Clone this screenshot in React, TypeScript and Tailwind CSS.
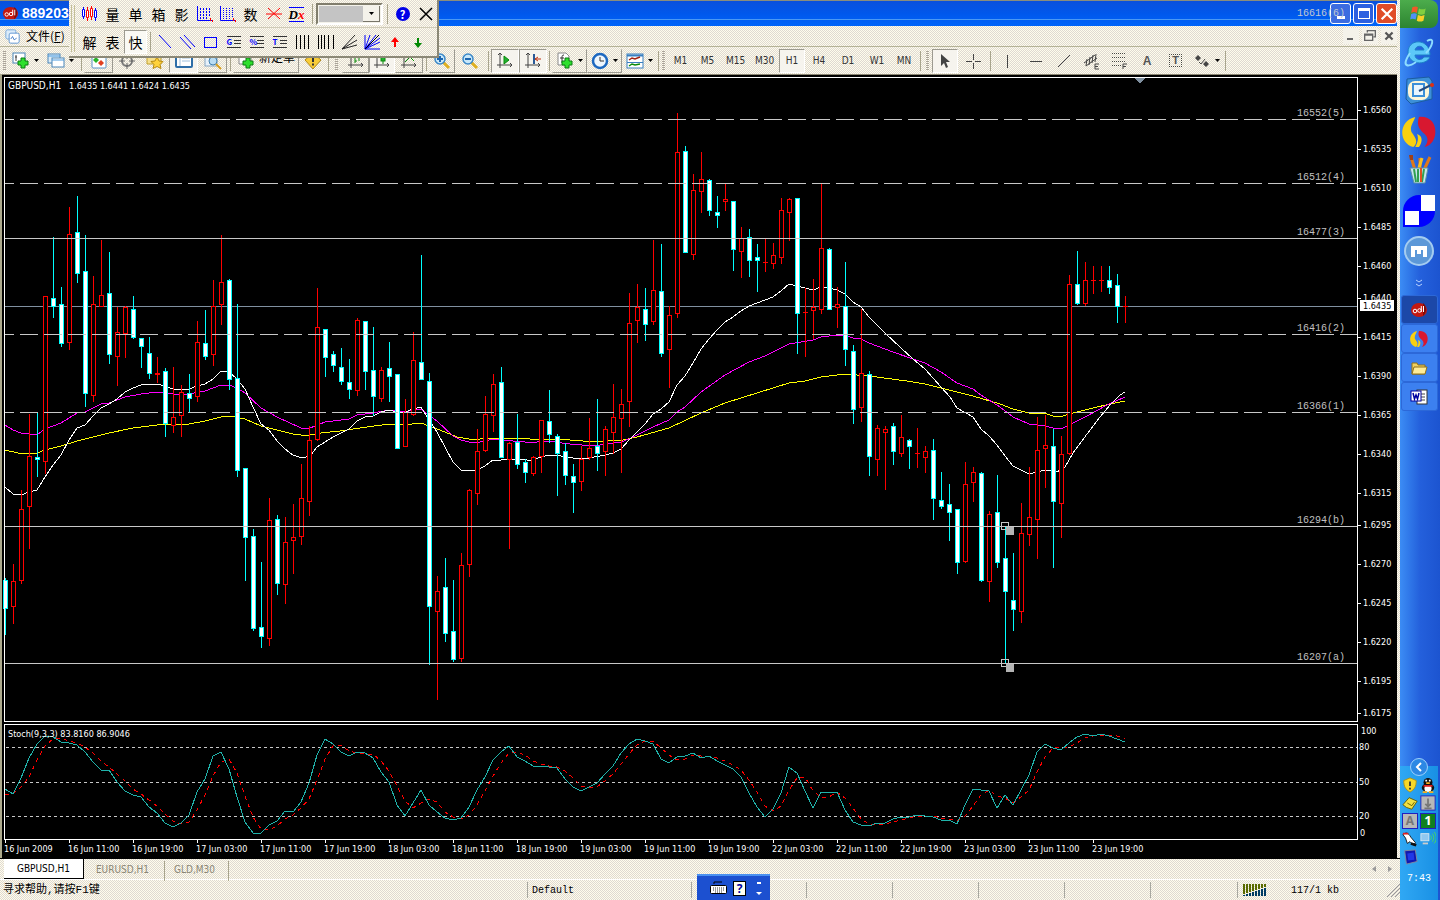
import React from "react";

const beige = "bg-[#efebe0] bg-[repeating-conic-gradient(#fffdec_0_25%,#dfd9d2_0_50%)] bg-[length:2px_2px]";
const ui = "font-['DejaVu_Sans_Condensed','DejaVu_Sans',sans-serif]";
const mono = "font-['Liberation_Mono','Noto_Sans_CJK_SC',monospace]";
const cjk = "font-['Noto_Sans_CJK_SC',sans-serif]";

// one bar per hour: direction, high, body top, body bottom, low
const bars = `d 578 580 609 635|u 564 581 607 624|u 490 509 581 584|u 414 456 507 549|d 412 457 460 477|u 296 296 462 474|d 237 298 307 318|d 287 304 344 347|u 207 234 343 350|d 196 232 274 283
d 235 271 394 407|u 276 304 396 402|u 240 295 307 307|d 252 293 355 364|u 307 332 357 386|u 306 307 334 358|d 296 309 338 339|d 338 338 347 368|d 337 353 374 379|u 357 373 375 383
d 368 371 424 437|u 367 417 426 433|u 385 392 416 437|d 374 393 399 412|u 321 342 397 402|d 310 343 357 360|u 280 306 355 366|u 235 282 305 325|d 279 280 380 390|d 304 378 471 477
d 468 468 538 581|d 529 536 629 631|d 562 627 637 648|u 498 520 639 646|d 515 519 584 595|u 517 542 585 604|u 504 537 541 574|u 464 498 537 545|u 426 440 502 516|u 288 327 440 441
d 329 329 358 377|d 351 354 366 372|d 348 367 382 385|d 359 382 390 399|u 318 320 391 396|d 321 321 372 390|d 327 370 397 416|u 367 370 399 402|d 342 368 377 402|d 374 374 449 449
u 399 412 447 447|u 332 360 415 416|d 255 362 380 380|d 373 381 607 665|u 576 591 612 700|d 558 587 634 642|d 580 631 660 662|u 553 565 659 662|u 489 490 565 577|u 429 451 494 505
u 396 414 451 452|u 374 384 416 432|d 367 382 458 458|u 442 443 460 549|d 414 442 465 469|d 459 462 473 483|u 456 457 474 476|u 420 420 457 473|d 390 421 435 443|d 434 436 454 496
d 443 451 476 485|d 464 476 483 513|u 446 459 482 491|u 418 448 458 460|d 399 446 454 471|u 426 429 452 476|u 384 417 433 454|u 389 404 419 473|u 293 323 402 427|u 284 307 321 343
d 288 309 325 341|u 240 290 322 325|d 244 291 354 357|u 306 315 350 388|u 113 152 314 318|d 146 151 253 253|u 174 190 255 260|u 152 179 192 213|d 179 180 211 216|d 196 212 216 228
u 183 199 202 211|d 201 201 250 271|u 227 238 252 278|d 229 237 261 277|d 244 257 261 292|u 239 262 263 272|u 243 255 264 269|u 198 210 258 264|u 198 199 213 241|d 198 198 314 354
u 288 312 313 357|u 279 307 311 339|u 184 248 310 314|d 248 249 310 310|u 287 304 308 328|d 262 306 350 366|d 345 351 410 424|u 309 373 408 422|d 371 374 457 476|u 425 428 460 476
u 426 429 433 490|d 423 426 452 465|u 415 437 454 457|d 439 440 447 469|u 428 453 454 468|u 446 451 458 473|d 439 450 499 520|d 472 500 507 509|d 484 504 513 541|d 509 509 563 574
u 462 484 562 563|u 467 472 483 502|d 472 473 581 582|u 511 514 582 602|d 475 512 563 568|d 527 558 592 663|d 553 600 610 631|u 503 533 612 623|u 467 517 535 546|u 417 450 520 559
u 415 445 449 488|d 429 446 502 568|u 436 454 504 538|u 275 284 454 455|d 251 284 304 305|u 262 280 304 306|u 266 280 281 294|u 266 280 281 292|d 266 280 288 294|d 274 285 307 323
u 296 306 307 323`
  .split(/[|\n]/)
  .map((s) => {
    const [dir, ...v] = s.split(" ");
    return { up: dir === "u", v: v.map(Number) };
  });

const fastMa =
  "5,487 13,494 21,495 29,492 37,490 45,477 53,465 61,455 69,440 77,428 85,425 93,416 101,408 109,404 117,399 125,392 133,388 141,385 149,384 157,384 165,386 173,389 189,389 197,386 205,384 213,379 221,371 229,372 237,379 245,389 253,407 261,424 269,430 277,441 285,449 293,455 302,458 310,456 317,447 325,442 333,437 341,433 349,429 357,421 365,417 373,416 381,412 389,410 397,412 405,412 413,409 421,407 429,420 437,432 445,447 453,462 461,470 470,471 477,470 485,466 493,460 501,460 509,459 520,459 527,460 533,460 541,457 549,455 557,455 565,457 573,458 589,458 605,455 613,453 621,449 629,440 645,424 653,414 661,409 669,402 677,385 685,376 693,363 701,349 709,339 717,330 725,322 733,317 741,311 749,306 757,303 773,297 781,291 789,284 797,286 805,288 813,290 821,287 829,288 837,290 845,294 853,302 861,307 869,317 885,333 901,348 913,359 925,369 941,387 950,397 957,408 973,417 981,429 989,436 997,445 1005,456 1013,466 1029,474 1045,470 1057,472 1065,467 1073,453 1087,434 1100,417 1110,405 1120,395 1125,392";
const midMa =
  "5,425 13,430 21,433 37,435 45,429 61,423 69,418 77,413 85,412 101,404 109,403 125,397 141,394 157,392 173,394 189,394 205,391 221,385 229,385 237,388 245,393 261,408 277,417 301,428 310,428 325,422 349,419 357,415 373,413 389,410 403,412 421,409 429,415 437,421 453,436 461,440 469,442 480,442 493,439 513,441 525,442 537,442 547,441 570,444 593,446 621,442 629,439 653,427 669,420 677,412 685,407 701,392 725,375 749,362 765,356 789,344 813,340 821,337 837,335 845,335 853,338 861,339 869,343 893,352 913,359 925,363 941,372 957,383 973,389 981,395 1000,407 1013,417 1029,424 1045,426 1053,428 1061,429 1073,423 1087,416 1107,405 1125,397";
const slowMa =
  "5,450 18,453 37,453 45,450 61,446 77,441 109,433 133,428 157,425 189,424 205,421 221,417 230,416 245,419 261,426 293,434 301,435 310,435 321,433 340,431 360,428 389,424 403,425 421,423 437,429 445,432 457,437 469,439 480,439 490,438 520,438 530,439 557,439 583,441 607,441 623,440 637,437 669,428 701,413 725,403 757,393 789,383 805,381 821,377 845,374 869,376 907,381 925,384 973,396 1000,404 1013,409 1029,413 1047,414 1053,416 1063,416 1073,413 1093,408 1110,404 1125,401";

const stoch = [
  789, 794, 778, 758, 744, 736, 737, 742, 743, 745, 752, 762, 770, 770, 782, 791, 795, 797, 807, 813,
  823, 827, 823, 815, 792, 779, 756, 752, 769, 797, 822, 833, 833, 825, 821, 811, 812, 802, 783, 755,
  739, 744, 752, 756, 752, 753, 758, 772, 782, 805, 816, 803, 790, 805, 812, 818, 820, 818, 807, 790,
  777, 760, 752, 746, 757, 761, 766, 766, 767, 768, 779, 787, 791, 787, 783, 774, 766, 753, 744, 739,
  741, 744, 759, 763, 757, 756, 753, 758, 756, 761, 765, 769, 777, 793, 807, 817, 809, 793, 767, 773,
  791, 808, 792, 792, 792, 810, 822, 825, 826, 823, 823, 819, 817, 817, 815, 816, 817, 820, 820, 824,
  805, 789, 790, 791, 808, 795, 805, 790, 775, 752, 744, 748, 750, 743, 737, 734, 736, 734, 736, 739, 742,
];
const kLine = stoch.map((y, i) => `${5 + 8 * i},${y}`).join(" ");
const dLine = stoch
  .map((y, i) => {
    const a = stoch[i - 1] ?? 796;
    const b = stoch[i - 2] ?? 798;
    return `${5 + 8 * i},${Math.round((y + a + b) / 3)}`;
  })
  .join(" ");

const levels: [number, string, boolean][] = [
  [119, "16552(5)", true],
  [183, "16512(4)", true],
  [238, "16477(3)", false],
  [334, "16416(2)", true],
  [412, "16366(1)", true],
  [526, "16294(b)", false],
  [663, "16207(a)", false],
];

const prices: [number, string][] = [
  [110, "1.6560"], [149, "1.6535"], [188, "1.6510"], [227, "1.6485"], [266, "1.6460"], [298, "1.6440"],
  [337, "1.6415"], [376, "1.6390"], [415, "1.6365"], [454, "1.6340"], [493, "1.6315"], [525, "1.6295"],
  [564, "1.6270"], [603, "1.6245"], [642, "1.6220"], [681, "1.6195"], [713, "1.6175"],
];

const times = [
  "16 Jun 2009", "16 Jun 11:00", "16 Jun 19:00", "17 Jun 03:00", "17 Jun 11:00", "17 Jun 19:00",
  "18 Jun 03:00", "18 Jun 11:00", "18 Jun 19:00", "19 Jun 03:00", "19 Jun 11:00", "19 Jun 19:00",
  "22 Jun 03:00", "22 Jun 11:00", "22 Jun 19:00", "23 Jun 03:00", "23 Jun 11:00", "23 Jun 19:00",
];

function Chart() {
  return (
    <svg viewBox="0 74 1397 784" className={`block w-full bg-black text-[9px] ${ui}`} shapeRendering="crispEdges">
      <path d="M0 74h1397v1H0z" fill="#8b8674" />
      <path d="M0 74h2v784H0z" fill="#aca98c" />
      <path d="M5 306.500H1357" stroke="#8090a0" />
      <g fill="none" strokeWidth="1">
        <polyline points={slowMa} stroke="#ff0" />
        <polyline points={midMa} stroke="#f0f" />
        <polyline points={fastMa} stroke="#fff" />
      </g>
      {bars.map(({ up, v }, i) => {
        const x = 5 + 8 * i;
        const [h, t, b, l] = v;
        const c = up ? "#f00" : "#0ff";
        return (
          <g key={i}>
            <rect x={x} y={h} width="1" height={l - h} fill={c} />
            <rect x={x - 2} y={t} width="5" height={b - t} fill={c} />
            {b - t > 2 && <rect x={x - 1} y={t + 1} width="3" height={b - t - 2} fill={up ? "#000" : "#fff"} />}
          </g>
        );
      })}
      {levels.map(([y, label, dash]) => (
        <g key={y}>
          <path
            d={`M5 ${y}.500H1357`}
            stroke="#c8c8c8"
            strokeDasharray={dash ? "18 6" : undefined}
            strokeDashoffset={dash ? 9 : 0}
          />
          <text x="1297" y={y - 3} fill="#c0c0c0" className={`text-[10px] ${mono}`}>{label}</text>
        </g>
      ))}
      {[522, 659].map((y) => (
        <g key={y}>
          <rect x="1001.500" y={y + 0.5} width="7" height="7" fill="none" stroke="#c8c8c8" />
          <rect x="1006" y={y + 5} width="8" height="8" fill="#b4b4b4" />
        </g>
      ))}
      <path d="M1134 78h11l-5 5h-1z" fill="#8090a0" />
      <path d="M4.500 77.500H1357.500V721.500H4.500zM4.500 724.500H1357.500V839.500H4.500z" fill="none" stroke="#fff" />
      <text x="8" y="89" fill="#fff" className="text-[10px]">GBPUSD,H1</text>
      <text x="69" y="89" fill="#fff">1.6435 1.6441 1.6424 1.6435</text>
      {prices.map(([y, p]) => (
        <g key={p} fill="#fff">
          <rect x="1358" y={y} width="3" height="1" />
          <text x="1363" y={y + 3}>{p}</text>
        </g>
      ))}
      <rect x="1360" y="300" width="34" height="11" fill="#fff" />
      <text x="1363" y="309">1.6435</text>

      {[747, 782, 816].map((y) => (
        <path key={y} d={`M6 ${y}.500H1357`} stroke="#c8c8c8" strokeDasharray="3 3" />
      ))}
      <polyline points={dLine} fill="none" stroke="#f00" strokeDasharray="4 4" />
      <polyline points={kLine} fill="none" stroke="#20b2aa" />
      <g fill="#fff">
        <text x="8" y="737">Stoch(9,3,3) 83.8160 86.9046</text>
        <text x="1361" y="734">100</text>
        <text x="1359" y="750">80</text>
        <text x="1359" y="785">50</text>
        <text x="1359" y="819">20</text>
        <text x="1360" y="836">0</text>
        {times.map((t, i) => (
          <g key={t}>
            <rect x={5 + 64 * i} y="840" width="1" height="3" />
            <text x={4 + 64 * i} y="852">{t}</text>
          </g>
        ))}
      </g>
    </svg>
  );
}

function Icon({ children, size = "w-[18px] h-[18px]", box = "0 0 18 18" }: any) {
  return (
    <svg viewBox={box} className={`shrink-0 ${size}`} fill="none" stroke="#444" strokeWidth="1" aria-hidden="true">
      {children}
    </svg>
  );
}

const Caret = () => (
  <svg viewBox="0 0 5 3" className="h-[3px] w-[5px] shrink-0" aria-hidden="true"><path d="M0 0h5L2.500 3z" /></svg>
);

function Tool({ w, label, on, raised, children }: any) {
  const edge = on
    ? "border border-[#9c9a90] border-r-white border-b-white bg-[#f6f4ee]"
    : raised
      ? "border border-transparent border-r-[#9c9a90] border-b-[#9c9a90]"
      : "";
  return (
    <button aria-label={label} className={`flex h-6 shrink-0 items-center justify-center gap-1 ${w} ${edge}`}>
      {children}
    </button>
  );
}

const Sep = ({ w = "w-[6px]" }) => (
  <span className={`flex h-6 shrink-0 justify-center ${w}`}><i className="h-5 w-px self-center bg-[#a8a48c]" /></span>
);
const Grip = ({ w = "w-[9px]" }) => (
  <span className={`flex shrink-0 justify-center ${w}`}>
    <i className="h-5 w-[3px] bg-[repeating-linear-gradient(#aaa498_0_1px,transparent_1px_2px)]" />
  </span>
);

const plus = <path d="M9 6h4v3h3v4h-3v3H9v-3H6V9h3z" fill="#2ee02e" stroke="#0a7d12" />;
const axes = <path d="M4 1v15M1 13h15M2 3l2-2 2 2M14 11l2 2-2 2" />;

function Toolbar() {
  const frames: [string, string][] = [
    ["M1", "w-[27px]"], ["M5", "w-[27px]"], ["M15", "w-[29px]"], ["M30", "w-[29px]"], ["H1", "w-[26px]"],
    ["H4", "w-[28px]"], ["D1", "w-[30px]"], ["W1", "w-[28px]"], ["MN", "w-[26px]"],
  ];
  return (
    <div className={`flex h-7 items-center overflow-hidden border-t border-[#b4b296] ${beige}`}>
      <Grip />
      <Tool w="w-[33px]" label="New chart">
        <Icon><rect x="1" y="1" width="12" height="10" fill="#fff" stroke="#4a86b8" /><path d="M4 3v6M3 5h2" />{plus}</Icon><Caret />
      </Tool>
      <Tool w="w-[36px]" label="Profiles">
        <Icon><rect x="1" y="2" width="12" height="9" fill="#dcecf8" stroke="#4a86b8" /><rect x="5" y="6" width="12" height="9" fill="#fff" stroke="#4a86b8" /><path d="M1 4h12M5 8h12" stroke="#4a9be0" /></Icon><Caret />
      </Tool>
      <Sep />
      <Tool w="w-[29px]" label="Market watch" raised>
        <Icon><rect x="2" y="1" width="14" height="15" rx="1" fill="#fff" stroke="#5b94c8" /><path d="M3 8l3-3 3 3-3 3z" fill="#28b428" stroke="none" /><path d="M8 11l3-3 3 3-3 3z" fill="#e04020" stroke="none" /></Icon>
      </Tool>
      <Tool w="w-[28px]" label="Data window">
        <Icon><circle cx="9" cy="9" r="5" stroke="#777" strokeWidth="2" /><path d="M9 1v6M9 11v6M1 9h6M11 9h6" stroke="#666" /></Icon>
      </Tool>
      <Tool w="w-[28px]" label="Navigator">
        <Icon><path d="M1 3h6l2 2h6v7H1z" fill="#f6e08c" stroke="#c0a030" /><path d="M11 5l2 4 4 .5-3 3 1 4-4-2-4 2 1-4-3-3 4-.5z" fill="#ffd23c" stroke="#b88a10" /></Icon>
      </Tool>
      <Tool w="w-[29px]" label="Terminal" on>
        <Icon><rect x="1" y="2" width="16" height="13" rx="1" fill="#fff" stroke="#2e6ea8" strokeWidth="2" /><path d="M5 3v11M7 6h8M7 9h8" stroke="#a0c0dc" /></Icon>
      </Tool>
      <Tool w="w-[29px]" label="Strategy tester" raised>
        <Icon><rect x="1" y="1" width="12" height="13" fill="#e8f2fa" stroke="#88a8c4" /><circle cx="9" cy="9" r="4" fill="#b8dcf4" stroke="#4080b0" /><path d="M12 12l5 5" stroke="#d8a020" strokeWidth="2" /></Icon>
      </Tool>
      <Sep />
      <Tool w="w-[66px]" label="New order" raised>
        <Icon><path d="M2 1h9l3 3v8H2z" fill="#fff" stroke="#888" />{plus}</Icon>
        <span className={`mb-2 text-[12px] leading-[14px] ${cjk}`}>新定单</span>
      </Tool>
      <Tool w="w-[27px]" label="Warnings">
        <Icon><path d="M9 1l8 7-8 9-8-9z" fill="#f8cc38" stroke="#b08818" /><path d="M9 4v6M9 11.500v2" stroke="#333" strokeWidth="2" /></Icon>
      </Tool>
      <Sep w="w-[5px]" />
      <Grip w="w-[11px]" />
      <Tool w="w-[27px]" label="Bar chart" raised><Icon>{axes}<path d="M8 4v7M12 2v7M8 9h2M10 4h2" stroke="#0a8a0a" /></Icon></Tool>
      <Tool w="w-[26px]" label="Candlesticks" on><Icon>{axes}<path d="M10 1v11" stroke="#0a8a0a" /><rect x="8" y="3" width="4" height="6" fill="#20b030" stroke="#0a8a0a" /></Icon></Tool>
      <Tool w="w-[28px]" label="Line chart" raised><Icon>{axes}<path d="M5 10l5-5 4 4" stroke="#0a8a0a" /></Icon></Tool>
      <Sep />
      <Tool w="w-[26px]" label="Zoom in" raised><Icon><path d="M10 10l6 6" stroke="#e0b020" strokeWidth="3" /><circle cx="7" cy="7" r="5" fill="#c8e8fa" stroke="#3a88c8" strokeWidth="1.500" /><path d="M4 7h6M7 4v6" stroke="#1c66b0" strokeWidth="2" /></Icon></Tool>
      <Tool w="w-[30px]" label="Zoom out"><Icon><path d="M10 10l6 6" stroke="#e0b020" strokeWidth="3" /><circle cx="7" cy="7" r="5" fill="#c8e8fa" stroke="#3a88c8" strokeWidth="1.500" /><path d="M4 7h6" stroke="#1c66b0" strokeWidth="2" /></Icon></Tool>
      <Sep />
      <Tool w="w-[28px]" label="Auto scroll" on><Icon>{axes}<path d="M8 4l5 4-5 4z" fill="#20b030" stroke="#0a8a0a" /></Icon></Tool>
      <Tool w="w-[28px]" label="Chart shift" on><Icon>{axes}<path d="M10 2v10" stroke="#2a5a98" strokeWidth="2" /><path d="M17 7h-6M14 5l-3 2 3 2" stroke="#c03010" /></Icon></Tool>
      <Sep w="w-[5px]" />
      <Tool w="w-[35px]" label="Indicators" raised><Icon><path d="M2 1h8l3 3v9H2z" fill="#fff" stroke="#888" /><path d="M8 3c-2 0-2 1-2 3v5M4 6h4" stroke="#333" />{plus}</Icon><Caret /></Tool>
      <Tool w="w-[35px]" label="Periods" raised><Icon><circle cx="9" cy="9" r="7" fill="#eef6fd" stroke="#1c68c0" strokeWidth="2.500" /><path d="M9 5v4h4" stroke="#333" /></Icon><Caret /></Tool>
      <Tool w="w-[34px]" label="Templates"><Icon><rect x="1" y="2" width="16" height="14" fill="#fff" stroke="#3a80c0" /><path d="M1 3.500h16" stroke="#3a80c0" strokeWidth="2" /><path d="M1 10.500h16" stroke="#3a80c0" /><path d="M3 8l3-2 3 1 5-2" stroke="#a02010" strokeWidth="1.500" /><path d="M3 14l3-2 3 1 5-1" stroke="#0a8a0a" strokeWidth="1.500" /></Icon><Caret /></Tool>
      <Sep w="w-[4px]" />
      <Grip w="w-[7px]" />
      {frames.map(([t, w]) => (
        <Tool key={t} w={w} label={t} on={t === "H1"}><span className={`text-[10px] text-[#333] ${ui}`}>{t}</span></Tool>
      ))}
      <Sep />
      <Grip />
      <Tool w="w-[26px]" label="Cursor" on><Icon><path d="M5 2v12l3-3 2 5 2-1-2-5h4z" fill="#444" stroke="none" /></Icon></Tool>
      <Tool w="w-[30px]" label="Crosshair"><Icon><path d="M9.500 2v6M9.500 11v6M2 9.500h6M11 9.500h6" /></Icon></Tool>
      <Sep w="w-[5px]" />
      <Tool w="w-[28px]" label="Vertical line"><Icon><path d="M9.500 3v13" /></Icon></Tool>
      <Tool w="w-[29px]" label="Horizontal line"><Icon><path d="M3 9.500h12" /></Icon></Tool>
      <Tool w="w-[28px]" label="Trendline"><Icon><path d="M3 15L15 3" /></Icon></Tool>
      <Tool w="w-[27px]" label="Channel">
        <Icon><path d="M1 11L12 3M3 14L14 6M4 7l-1 7M7 5l-1 8M10 3L9 11M13 2l-1 8" /><path d="M16 12h-4v5h4M12 14.500h3" /></Icon>
      </Tool>
      <Tool w="w-[28px]" label="Fibonacci">
        <Icon><path d="M2 1.500h14M2 5.500h14M2 9.500h14M2 13.500h9" strokeDasharray="1 1" /><path d="M13 17v-5h4M13 14.500h3" /></Icon>
      </Tool>
      <Tool w="w-[28px]" label="Text"><span className="font-['Liberation_Sans',sans-serif] text-[12px] font-bold text-[#555]">A</span></Tool>
      <Tool w="w-[29px]" label="Text label">
        <span className="flex h-[13px] w-[13px] items-center justify-center border border-dotted border-[#444] font-['Liberation_Sans',sans-serif] text-[11px] leading-[11px] font-bold text-[#555]">T</span>
      </Tool>
      <Tool w="w-[33px]" label="Arrows">
        <Icon><path d="M2 6l3-3 3 3-3 3zM10 12l3-3 3 3-3 3z" fill="#444" stroke="none" /><path d="M6 10l2 2 4-5" /></Icon><Caret />
      </Tool>
      <Sep w="w-[4px]" />
    </div>
  );
}

function Glyph({ children, on }: any) {
  return (
    <button
      className={`flex h-6 w-[23px] shrink-0 items-center justify-center text-[14px] leading-none ${cjk} ${on ? "border border-[#9c9a90] border-r-white border-b-white bg-[#faf9f4]" : ""}`}
    >
      {children}
    </button>
  );
}

const Lines = ({ t }: { t: string }) => (
  <span className="relative">
    <Icon size="w-4 h-4" box="0 0 16 16"><path d="M1 2.500h14M8 6.500h7M8 9.500h7M1 13.500h14" stroke="#333" /></Icon>
    <b className="absolute top-[3px] left-px text-[8px] leading-[9px] text-[#00f]">{t}</b>
  </span>
);

function ToolBox() {
  return (
    <div className={`absolute top-0 left-[69px] flex h-[58px] w-[370px] border-r-2 border-b-2 border-[#8b8876] pt-px ${beige}`}>
      <span className="my-1 ml-[2px] flex w-[7px] gap-[2px]">
        <i className="w-px bg-[#c4bf98]" />
        <i className="w-px bg-[#c4bf98]" />
      </span>
      <div className="flex flex-1 flex-col">
        <div className="flex h-[27px] items-center border-b border-[#d0ccb8]">
          <Glyph><Icon><path d="M2.500 2v12M14.500 3v13" stroke="#00f" /><path d="M6.500 2v14M10.500 1v14" stroke="#f00" /><path d="M1.500 4.500h2v7h-2zM13.500 5.500h2v7h-2z" fill="#fff" stroke="#00f" /><path d="M5.500 5.500h2v7h-2zM9.500 3.500h2v8h-2z" fill="#fff" stroke="#f00" /></Icon></Glyph>
          <Glyph>量</Glyph>
          <Glyph>单</Glyph>
          <Glyph>箱</Glyph>
          <Glyph>影</Glyph>
          {[0, 1].map((k) => (
            <Glyph key={k}>
              <Icon><path d="M1.500 1v14.500H16" stroke="#00f" /><path d="M4.500 3v11M7.500 3v11M10.500 3v11M13.500 3v9" stroke="#00f" strokeDasharray={k ? "1 1" : "2 1"} /><path d="M14.500 13v3M16.500 15v2" stroke="#f00" /></Icon>
            </Glyph>
          ))}
          <Glyph>数</Glyph>
          <Glyph><Icon><path d="M1 9h16M3 3l12 11M15 3L3 14" stroke="#f00" /></Icon></Glyph>
          <Glyph>
            <span className="border-y border-[#00f] font-['Liberation_Serif',serif] text-[13px] leading-[13px] font-bold italic">D<span className="text-[#f00]">x</span></span>
          </Glyph>
          <Sep w="w-2" />
          <label className="flex h-[22px] w-[67px] border-2 border-[#807d6c] border-r-white border-b-white bg-[#f4f2ea] p-px">
            <select aria-label="Preset" className="h-full w-11 appearance-none bg-[#c4c4c4]" />
            <span className="flex flex-1 items-center justify-center border-r border-b border-[#77756a]"><Caret /></span>
          </label>
          <Sep w="w-2" />
          <Glyph><span className="flex h-[14px] w-[14px] items-center justify-center rounded-full bg-[#0000e8] text-[11px] font-bold text-white">?</span></Glyph>
          <Glyph><Icon><path d="M3 3l12 12M15 3L3 15" stroke="#000" strokeWidth="1.500" /></Icon></Glyph>
        </div>
        <div className="flex flex-1 items-center">
          <Glyph>解</Glyph>
          <Glyph>表</Glyph>
          <Glyph on>快</Glyph>
          <Sep />
          <Glyph><Icon><path d="M3 2l12 13" stroke="#00f" /></Icon></Glyph>
          <Glyph><Icon><path d="M1 4l11 12M5 2l11 12" stroke="#00f" /></Icon></Glyph>
          <Glyph><Icon><rect x="2.500" y="4.500" width="12" height="10" stroke="#00f" /></Icon></Glyph>
          <Glyph><Lines t="G" /></Glyph>
          <Glyph><Lines t="%" /></Glyph>
          <Glyph><Lines t="T" /></Glyph>
          <Glyph><Icon><path d="M2.500 2v14M6.500 2v14M10.500 2v14M14.500 2v14" stroke="#000" /></Icon></Glyph>
          <Glyph><Icon><path d="M1.500 2v14M4.500 2v14M7.500 2v14M11.500 2v14M16.500 2v14" stroke="#000" /></Icon></Glyph>
          <Glyph><Icon><path d="M2 16L15 2M2 16L17 7M2 16L17 12" stroke="#222" /></Icon></Glyph>
          <Glyph><Icon><path d="M2 16V2M2 16L7 2M2 16L13 2M2 16L17 5M2 16l15-7M2 16h15" stroke="#00f" /><path d="M2 16L16 2" stroke="#000" /></Icon></Glyph>
          <Glyph><Icon><path d="M9 4l4 5h-3v5H8V9H5z" fill="#f00" stroke="none" /></Icon></Glyph>
          <Glyph><Icon><path d="M9 15l4-5h-3V5H8v5H5z" fill="#080" stroke="none" /></Icon></Glyph>
        </div>
      </div>
    </div>
  );
}

const oneLogo = (
  <>
    <ellipse cx="9" cy="9" rx="8" ry="7" fill="#c41810" stroke="none" />
    <path d="M13 2c4 3 4 9 0 13z" fill="#7c0c08" stroke="none" />
    <circle cx="5" cy="10" r="1.800" stroke="#fff" />
    <circle cx="9.500" cy="9.500" r="1.800" stroke="#fff" />
    <path d="M11.300 5v6M13.500 5v6" stroke="#fff" />
  </>
);
const swirl = (
  <>
    <path d="M7 1C-2 3-2 15 6 17c3-3 1-5-1-8-1-3 1-5 2-8z" fill="#f8d010" stroke="none" />
    <path d="M9 1c11-1 11 14 3 16 2-3 2-5 0-7-4-3-4-6-3-9z" fill="#d81830" stroke="none" />
    <path d="M8 10c3 1 3 4 1 7H7c1-2 2-4 1-7z" fill="#f8d010" stroke="none" />
  </>
);

function TitleBar() {
  const btn = "flex h-[21px] w-[21px] items-center justify-center rounded-[3px] border border-white";
  return (
    <header className="relative flex h-[26px] items-center border-t border-[#8a8d7c] bg-linear-to-b from-[#0a50dc] via-[#0058ec] to-[#0064fa] pl-[2px]">
      <i className="absolute inset-x-0 top-[18px] h-px bg-[#5ca8f4]/80" />
      <Icon size="w-[17px] h-[17px]">{oneLogo}</Icon>
      <h1 className="ml-[3px] flex-1 font-['Liberation_Sans',sans-serif] text-[14px] font-bold text-white">889203</h1>
      <div className="relative flex gap-[2px]">
        <button aria-label="Minimize" className={`${btn} bg-[#3c6ce0]`}><i className="mt-2 h-[3px] w-2 bg-white" /></button>
        <button aria-label="Maximize" className={`${btn} bg-[#2c60e0]`}><i className="h-[11px] w-3 border border-t-[3px] border-white" /></button>
        <button aria-label="Close" className={`${btn} bg-[#e04c28]`}>
          <Icon size="w-4 h-4"><path d="M3 3l12 12M15 3L3 15" stroke="#fff" strokeWidth="2.500" /></Icon>
        </button>
      </div>
      <span className={`absolute right-[52px] text-[10px] text-[#c0c8d0] ${mono}`}>16616(6)</span>
    </header>
  );
}

function MenuBar() {
  return (
    <nav className={`flex h-5 items-center pl-[5px] ${beige}`}>
      <Icon size="w-[15px] h-[15px]"><rect x="1" y="1" width="12" height="11" rx="2" fill="#dcecfa" stroke="#6aa0d8" /><rect x="5" y="5" width="12" height="12" rx="2" fill="#fff" stroke="#4a88cc" /><path d="M7 12l2-3 2 4 3-2" stroke="#3070c0" /></Icon>
      <button className={`ml-[6px] text-[12px] leading-5 ${cjk}`}>文件(<u>F</u>)</button>
      <div className="ml-auto flex gap-[3px]">
        <button aria-label="Minimize chart" className="h-4 w-4 bg-[#f4f2ea]"><i className="ml-1 mt-[6px] block h-[2px] w-[6px] bg-[#666]" /></button>
        <button aria-label="Restore chart" className="h-4 w-4 bg-[#f4f2ea]"><Icon size="w-4 h-4"><path d="M6 5V3h9v7h-2M3 7h9v7H3zM3 8h9" stroke="#666" strokeWidth="1.500" /></Icon></button>
        <button aria-label="Close chart" className="h-4 w-4 bg-[#f4f2ea]"><Icon size="w-4 h-4"><path d="M5 5l8 8M13 5l-8 8" stroke="#555" strokeWidth="2.500" /></Icon></button>
      </div>
    </nav>
  );
}

function BottomBars() {
  return (
    <footer className={`flex-1 ${beige}`}>
      <div className={`flex h-[21px] border-t border-black pl-1 text-[10px] text-[#8a8674] ${ui}`}>
        <button className="h-5 w-20 border-r border-b border-black bg-white text-black">GBPUSD,H1</button>
        <button className="h-5 w-[77px]">EURUSD,H1</button>
        <Sep w="w-[7px]" />
        <button className="h-5 w-[53px]">GLD,M30</button>
        <Sep w="w-[14px]" />
        <div className="ml-auto flex w-7 items-center justify-between pr-2">
          <svg viewBox="0 0 4 6" className="h-[6px] w-1"><path d="M4 0v6L0 3z" fill="#999" /></svg>
          <svg viewBox="0 0 4 6" className="h-[6px] w-1"><path d="M0 0v6l4-3z" fill="#999" /></svg>
        </div>
      </div>
      <div className={`flex h-[21px] items-center divide-x divide-[#a8a8a0] border-t border-white text-[10px] *:flex *:h-4 *:items-center ${mono}`}>
        <span className="flex-1 pl-[3px] text-[11px]">寻求帮助,请按F1键</span>
        <span className="w-[164px] pl-1">Default</span>
        <span className="w-[115px]" />
        <span className="w-[86px]" />
        <span className="w-[86px]" />
        <span className="w-[86px]" />
        <span className="w-[86px]" />
        <span className="w-[87px]" />
        <span className="w-[162px] gap-6 pl-[5px]">
          <svg viewBox="0 0 24 12" className="h-3 w-6" aria-hidden="true">
            {Array.from({ length: 8 }, (_, i) => (
              <g key={i}>
                <rect x={i * 3} y="0" width="2" height={10 - i} fill="#5a6a00" />
                <rect x={i * 3} y={11 - i} width="2" height={1 + i} fill="#003c64" />
              </g>
            ))}
          </svg>
          117/1 kb
          <svg viewBox="0 0 14 14" className="ml-auto h-[14px] w-[14px]" stroke="#999"><path d="M1 14L14 1M5 14l9-9M9 14l5-5" /></svg>
        </span>
      </div>
    </footer>
  );
}

function LanguageBar() {
  return (
    <div className="absolute bottom-0 left-[697px] flex h-[26px] w-[73px] items-center border-t-2 border-[#4a90f0] bg-[#1c50d0] pl-[13px]">
      <button aria-label="Keyboard">
        <svg viewBox="0 0 17 14" className="h-[14px] w-[17px]"><path d="M4 3V1h8" fill="none" stroke="#000" /><rect x=".5" y="4.500" width="16" height="8" rx="1" fill="#fff" stroke="#000" /><path d="M3 7h11M3 9h11M5 11h7" stroke="#333" strokeDasharray="1 1" /></svg>
      </button>
      <button aria-label="Help" className="ml-[6px] h-[15px] w-[13px] border border-black bg-[#fffff0] text-[12px] leading-[13px] font-bold text-[#0000a0]">?</button>
      <button aria-label="Options" className="ml-[10px] flex flex-col items-center gap-2">
        <i className="h-[2px] w-1 bg-white" />
        <svg viewBox="0 0 6 3" className="h-[3px] w-[6px]"><path d="M0 0h6L3 3z" fill="#fff" /></svg>
      </button>
    </div>
  );
}

function TaskBar() {
  const big = "w-8 h-8";
  const task = "flex h-[29px] w-[37px] items-center justify-center rounded-[3px] border border-[#2c68d8]";
  return (
    <aside className="flex w-10 shrink-0 flex-col items-center bg-linear-to-r from-[#3c8cf4] via-[#2460dc] to-[#1c54d0] pr-[2px]">
      <button aria-label="Start" className="flex h-7 w-full items-center justify-center rounded-r-lg bg-linear-to-b from-[#4cac4c] to-[#2c8430]">
        <Icon size="w-5 h-5"><path d="M3 3c2-1 4-1 5 0L7 8C5 7 4 7 2 8z" fill="#f05828" stroke="none" /><path d="M9 4c2 1 4 1 6 0l-1 5c-2 1-4 1-6 0z" fill="#80d040" stroke="none" /><path d="M2 9c2-1 4-1 5 0l-1 5c-2-1-4-1-5 0z" fill="#5090f8" stroke="none" /><path d="M8 10c2 1 4 1 6 0l-1 5c-2 1-4 1-6 0z" fill="#f8d028" stroke="none" /></Icon>
      </button>
      <button aria-label="Internet Explorer" className="mt-2">
        <Icon size={big} box="0 0 32 32"><path d="M26 19H12c0 5 7 6 9 2h6c-4 9-22 8-22-5 0-14 22-14 22 3zM12 14h9c-1-5-8-5-9 0z" fill="#5cc8f8" stroke="#1c80c8" /><path d="M24 5c9-5 5 6-1 12M7 17C-3 32 6 31 13 26" stroke="#8cdcff" strokeWidth="2" /></Icon>
      </button>
      <button aria-label="Outlook" className="mt-[7px]">
        <Icon size={big} box="0 0 32 32"><path d="M4 4l22-2 3 4v18L8 29 3 24z" fill="#3c90d8" stroke="#1c5ca0" /><rect x="5" y="6" width="21" height="19" rx="7" fill="#fdf6d8" stroke="none" /><path d="M10 9h11v12H10z" fill="#e8f6ff" stroke="#3c90d8" strokeWidth="2" /><path d="M16 16l12-6" stroke="#244c80" strokeWidth="2" /><circle cx="29" cy="10" r="2" fill="#e03010" stroke="none" /></Icon>
      </button>
      <button aria-label="Quotes" className="mt-2"><Icon size="w-[34px] h-[34px]">{swirl}</Icon></button>
      <button aria-label="Paint" className="mt-[5px]">
        <Icon size={big} box="0 0 32 32"><path d="M12 16L8 3M17 16V4M21 16l6-13" stroke="#e07818" strokeWidth="3" /><path d="M6 1h4v5H7z" fill="#a04018" stroke="none" /><path d="M16 14l3-10" stroke="#f8c020" strokeWidth="3" /><path d="M7 14h18l-3 15H11z" fill="#c8e4ec" stroke="#5890a8" /><path d="M11 15l2 13M15 15v13M21 15l-2 13" stroke="#30a050" strokeWidth="2" /><path d="M18 14v14" stroke="#e05020" strokeWidth="2" /></Icon>
      </button>
      <button aria-label="Charts" className="mt-[9px]">
        <Icon size={big} box="0 0 32 32"><circle cx="16" cy="16" r="16" fill="#00f" stroke="none" /><path d="M18 0h14v16H18zM2 16h14v14H2z" fill="#fff" stroke="none" /><path d="M0 16h2v14h14v2H0z" fill="#00f" stroke="none" /></Icon>
      </button>
      <button aria-label="Maxthon" className="mt-2">
        <Icon size={big} box="0 0 32 32"><circle cx="16" cy="16" r="14" fill="#5c98d8" stroke="#a4ccf0" strokeWidth="2" /><path d="M8 22V11h16v11h-4v-7h-2v4h-4v-4h-2v7z" fill="#fff" stroke="none" /></Icon>
      </button>
      <button aria-label="More" className="mt-3 mb-2">
        <Icon size="w-2 h-2" box="0 0 8 8"><path d="M1 1l3 2 3-2M1 5l3 2 3-2" stroke="#b8d4ff" /></Icon>
      </button>
      <button aria-label="ODL" className={`${task} bg-[#1c48a8]`}><Icon>{oneLogo}</Icon></button>
      <button aria-label="Quotes window" className={`${task} bg-[#3c80f0]`}><Icon>{swirl}</Icon></button>
      <button aria-label="Folder" className={`${task} bg-[#3c80f0]`}>
        <Icon><path d="M2 4h5l1 2h7v9H2z" fill="#f0d060" stroke="#907018" /><path d="M4 8h13l-2 7H2z" fill="#ffec98" stroke="#907018" /></Icon>
      </button>
      <button aria-label="Word" className={`${task} bg-[#3c80f0]`}>
        <Icon><rect x="7" y="2" width="10" height="14" fill="#fff" stroke="#333" /><path d="M10 6h5M10 9h5M10 12h5" /><rect x="1" y="3" width="10" height="10" fill="#fff" stroke="#0000a0" /><path d="M3 5l1.500 6L6 7l1.500 4L9 5" stroke="#0000a0" strokeWidth="1.500" /></Icon>
      </button>
      <div className="relative mt-auto flex h-[134px] w-full flex-col items-center bg-linear-to-r from-[#30a8f4] to-[#1890e4]">
        <button aria-label="Show hidden icons" className="absolute -top-2 flex h-[18px] w-[18px] items-center justify-center rounded-full border border-[#9cd0fc] bg-[#2c88e4]">
          <Icon size="w-3 h-3" box="0 0 12 12"><path d="M8 2L4 6l4 4" stroke="#fff" strokeWidth="2" /></Icon>
        </button>
        <div className="mt-[11px] grid grid-cols-2 gap-x-[2px] gap-y-[2px]">
          <Icon size="w-4 h-4"><path d="M9 1l7 3c0 7-2 10-7 13C4 14 2 11 2 4z" fill="#f8d828" stroke="#b09010" /><path d="M9 5v5M9 12v2" stroke="#333" strokeWidth="2" /></Icon>
          <Icon size="w-4 h-4"><circle cx="9" cy="6" r="5" fill="#111" stroke="none" /><ellipse cx="9" cy="12" rx="7" ry="5" fill="#111" stroke="none" /><ellipse cx="9" cy="13" rx="4" ry="4" fill="#fff" stroke="none" /><path d="M4 10h10" stroke="#e02020" strokeWidth="2" /><path d="M7 7h4M3 17h5M10 17h5" stroke="#f8b020" strokeWidth="2" /><path d="M7 3v2M11 3v2" stroke="#fff" strokeWidth="2" /></Icon>
          <Icon size="w-4 h-4"><path d="M1 11l7-8 9 4-6 9-6-2z" fill="#f0e040" stroke="#605800" /><path d="M6 9l5 3 3-4" stroke="#605800" /></Icon>
          <Icon size="w-4 h-4"><rect x="1" y="1" width="16" height="16" fill="#b8b8b8" stroke="#2020c0" /><path d="M9 4v9M6 10l3 3 3-3M5 15h8" stroke="#777" strokeWidth="2" /></Icon>
          <span className="flex h-4 w-4 items-center justify-center border border-[#2020c0] bg-[#b8b8b8] text-[12px] font-bold text-[#777]">A</span>
          <span className="flex h-4 w-4 items-center justify-center border border-[#2020c0] bg-[#108020] text-[13px] font-bold text-white">1</span>
          <Icon size="w-4 h-4"><path d="M1 4c4-3 6-2 9 3l5 6-2 3-4-4-3 2-2-6z" fill="#fff" stroke="#111" /><path d="M1 3h6" stroke="#e02020" strokeWidth="2" /><path d="M10 14l6 2" stroke="#111" strokeWidth="3" /></Icon>
          <Icon size="w-4 h-4"><rect x="1" y="3" width="9" height="8" fill="#90c8f0" stroke="#d8e8f0" /><path d="M3 14h6" stroke="#ccc" strokeWidth="2" /><path d="M12 5c1 2 1 3 0 5M14 3c2 3 2 6 0 9M16 1c3 4 3 9 0 13" stroke="#50e050" /></Icon>
          <Icon size="w-4 h-4"><path d="M3 2l12-1 2 13-12 3z" fill="#1018b0" stroke="#889" /><path d="M6 5l7-1 1 8-7 1z" fill="#2038e8" stroke="none" /></Icon>
        </div>
        <time className={`mt-auto mb-[14px] text-[10px] leading-[14px] text-white ${mono}`}>7:43</time>
      </div>
    </aside>
  );
}

export default function App() {
  return (
    <div className="relative flex min-h-screen overflow-hidden text-black">
      <main className={`flex min-w-0 flex-1 flex-col ${beige}`}>
        <div className="pr-[3px]">
          <TitleBar />
          <MenuBar />
          <Toolbar />
          <Chart />
        </div>
        <BottomBars />
      </main>
      <TaskBar />
      <ToolBox />
      <LanguageBar />
    </div>
  );
}
